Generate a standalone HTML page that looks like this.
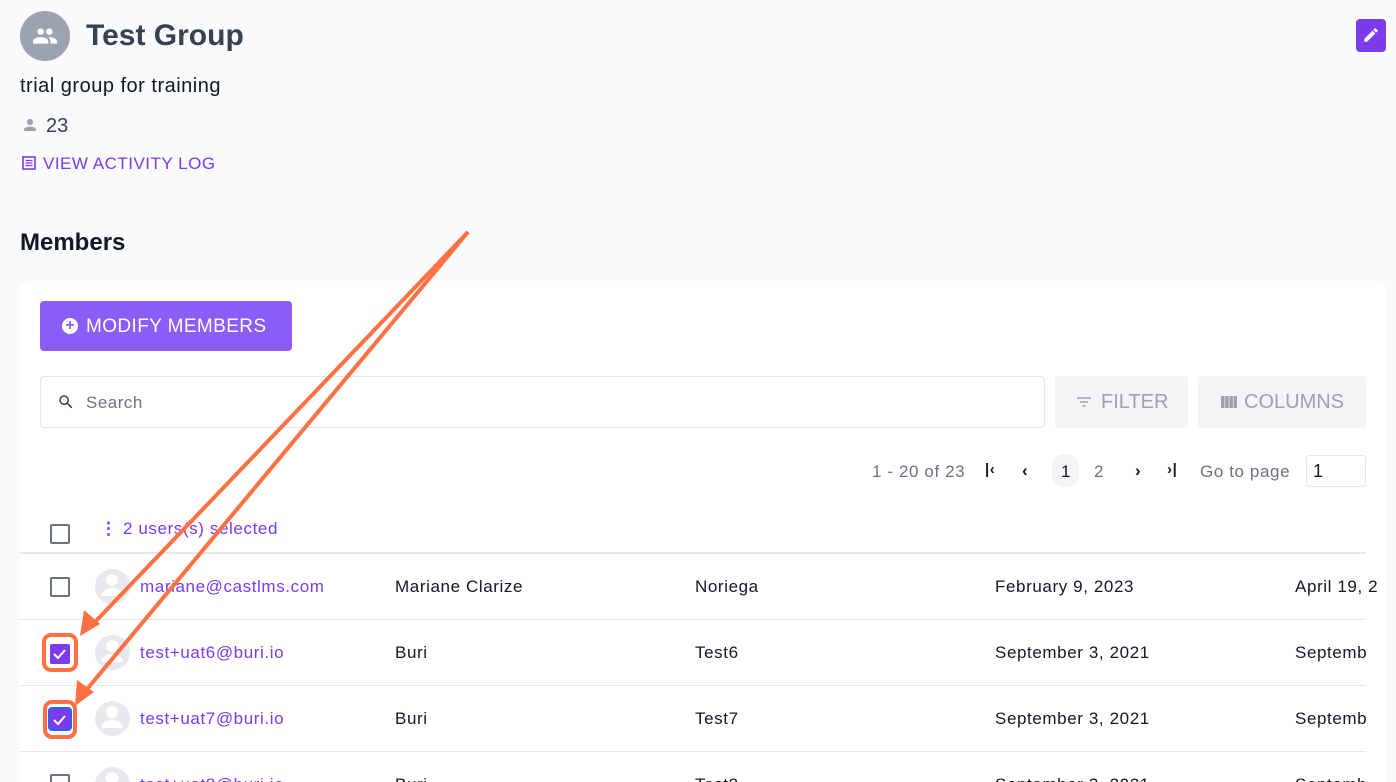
<!DOCTYPE html>
<html style="overflow:hidden;height:782px"><head><style>
*{box-sizing:border-box;margin:0;padding:0}
body{width:1396px;height:782px;overflow:hidden;background:#f9fafb;font-family:"Liberation Sans",sans-serif;position:relative;color:#111827}
.abs{position:absolute}
.card{position:absolute;left:20px;top:281px;width:1366px;height:501px;background:#fff;border-radius:8px 8px 0 0;overflow:hidden}
.cb{position:absolute;width:20px;height:20px;border:2px solid #6b7280;border-radius:2px;background:#fff}
.cbc{position:absolute;width:20px;height:20px;background:#7c3aed;border-radius:2px}
.av{position:absolute;width:35px;height:35px;border-radius:50%;background:#e8e9ec;overflow:hidden}
.row{position:absolute;left:20px;width:1346px;border-top:1px solid #e5e7eb}
.t{position:absolute;font-size:17px;white-space:nowrap;letter-spacing:0.6px}
.em{color:#7c3aed}
</style></head><body>
<div class="abs" style="left:20px;top:11px;width:50px;height:50px;border-radius:50%;background:#9ca3af"></div>
<svg class="abs" style="left:31px;top:23px" width="28" height="26" viewBox="0 0 24 24"><path fill="#fff" d="M16 11c1.66 0 2.99-1.34 2.99-3S17.66 5 16 5s-3 1.34-3 3 1.34 3 3 3zm-8 0c1.66 0 2.99-1.34 2.99-3S9.66 5 8 5 5 6.34 5 8s1.34 3 3 3zm0 2c-2.33 0-7 1.17-7 3.5V19h14v-2.5c0-2.33-4.67-3.5-7-3.5zm8 0c-.29 0-.62.02-.97.05 1.16.84 1.97 1.97 1.97 3.45V19h6v-2.5c0-2.33-4.67-3.5-7-3.5z"/></svg>
<div class="abs" style="left:86px;top:19px;font-size:30px;font-weight:bold;color:#374151">Test Group</div>
<div class="abs" style="left:1356px;top:19px;width:30px;height:33px;border-radius:4px;background:#7c3aed"></div>
<svg class="abs" style="left:1362px;top:26px" width="18" height="18" viewBox="0 0 24 24"><path fill="#fff" d="M3 17.25V21h3.75L17.81 9.94l-3.75-3.75L3 17.25zM20.71 7.04a1 1 0 000-1.41l-2.34-2.34a1 1 0 00-1.41 0l-1.83 1.83 3.75 3.75 1.83-1.83z"/></svg>
<div class="abs" style="left:20px;top:75px;font-size:20px;letter-spacing:0.5px">trial group for training</div>
<svg class="abs" style="left:21px;top:116px" width="18" height="18" viewBox="0 0 24 24"><path fill="#9ca3af" d="M12 12c2.21 0 4-1.79 4-4s-1.79-4-4-4-4 1.79-4 4 1.79 4 4 4zm0 2c-2.67 0-8 1.34-8 4v2h16v-2c0-2.66-5.33-4-8-4z"/></svg>
<div class="abs" style="left:46px;top:115px;font-size:20px;color:#374151">23</div>
<svg class="abs" style="left:22px;top:156px" width="14" height="14" viewBox="0 0 14 14"><rect x="1" y="1" width="12" height="12" fill="none" stroke="#7c3aed" stroke-width="1.6"/><path d="M3.5 4.5h7M3.5 7h7M3.5 9.5h7" stroke="#7c3aed" stroke-width="1.3"/></svg>
<div class="abs em" style="left:43px;top:154px;font-size:17px;letter-spacing:0.5px">VIEW ACTIVITY LOG</div>
<div class="abs" style="left:20px;top:229px;font-size:24px;font-weight:bold">Members</div>
<div class="card"></div>
<div class="abs" style="left:40px;top:301px;width:252px;height:50px;background:#8b5cf6;border-radius:4px;color:#fff;font-size:19px;line-height:52px;padding-left:46px;letter-spacing:0.4px">MODIFY MEMBERS</div>
<div class="abs" style="left:62px;top:318px;width:16px;height:16px;border-radius:50%;background:#fff;color:#8b5cf6;font-size:16px;font-weight:bold;line-height:16px;text-align:center">+</div>
<div class="abs" style="left:40px;top:376px;width:1005px;height:52px;border:1px solid #e5e7eb;border-radius:4px"></div>
<svg class="abs" style="left:57px;top:393px" width="18" height="18" viewBox="0 0 24 24"><path fill="#374151" d="M15.5 14h-.79l-.28-.27A6.47 6.47 0 0016 9.5 6.5 6.5 0 109.5 16c1.61 0 3.09-.59 4.23-1.57l.27.28v.79l5 4.99L20.49 19l-4.99-5zm-6 0C7.01 14 5 11.99 5 9.5S7.01 5 9.5 5 14 7.01 14 9.5 11.99 14 9.5 14z"/></svg>
<div class="abs" style="left:86px;top:393px;font-size:17px;color:#6b7280;letter-spacing:0.5px">Search</div>
<div class="abs" style="left:1055px;top:376px;width:133px;height:52px;background:#f3f4f6;border-radius:4px;color:#9ca3af;font-size:20px;line-height:53px;padding-left:46px">FILTER</div>
<svg class="abs" style="left:1076px;top:395px" width="16" height="14" viewBox="0 0 16 14"><path d="M1 3h14M4 7h8M6.5 11h3" stroke="#9ca3af" stroke-width="1.6"/></svg>
<div class="abs" style="left:1198px;top:376px;width:168px;height:52px;background:#f3f4f6;border-radius:4px;color:#9ca3af;font-size:20px;line-height:53px;padding-left:46px">COLUMNS</div>
<svg class="abs" style="left:1221px;top:396px" width="16" height="12" viewBox="0 0 16 12"><path d="M0 0h3.5v12H0zM4.2 0h3.5v12H4.2zM8.4 0h3.5v12H8.4zM12.6 0H16v12h-3.4z" fill="#9ca3af"/></svg>
<div class="t" style="left:872px;top:462px;color:#6b7280">1 - 20 of 23</div>
<div class="t" style="left:985px;top:461px;font-weight:bold;font-size:15px">|‹</div>
<div class="t" style="left:1022px;top:461px;font-weight:bold">‹</div>
<div class="abs" style="left:1052px;top:454px;width:27px;height:33px;border-radius:12px;background:#f3f4f6"></div>
<div class="t" style="left:1061px;top:462px">1</div>
<div class="t" style="left:1094px;top:462px;color:#6b7280">2</div>
<div class="t" style="left:1135px;top:461px;font-weight:bold">›</div>
<div class="t" style="left:1167px;top:461px;font-weight:bold;font-size:15px">›|</div>
<div class="t" style="left:1200px;top:462px;color:#6b7280">Go to page</div>
<div class="abs" style="left:1306px;top:455px;width:60px;height:32px;border:1px solid #e5e7eb;border-radius:4px;font-size:18px;padding:5px 6px">1</div>
<div class="cb" style="left:50px;top:524px"></div>
<div class="t em" style="left:100px;top:519px;font-weight:bold">⋮</div>
<div class="t em" style="left:123px;top:519px">2 users(s) selected</div>
<div class="row" style="top:552px;border-top:2px solid #e5e7eb"></div>
<div class="row" style="top:619px"></div><div class="row" style="top:685px"></div><div class="row" style="top:751px"></div>

<div class="cb" style="left:50px;top:577px"></div>
<div class="av" style="left:95px;top:569px"></div>
<div class="t em" style="left:140px;top:577px">mariane@castlms.com</div>
<div class="t" style="left:395px;top:577px">Mariane Clarize</div>
<div class="t" style="left:695px;top:577px">Noriega</div>
<div class="t" style="left:995px;top:577px">February 9, 2023</div>
<div class="t" style="left:1295px;top:577px">April 19, 2</div>

<div class="cbc" style="left:50px;top:644px"></div>
<div class="av" style="left:95px;top:635px"></div>
<div class="t em" style="left:140px;top:643px">test+uat6@buri.io</div>
<div class="t" style="left:395px;top:643px">Buri</div>
<div class="t" style="left:695px;top:643px">Test6</div>
<div class="t" style="left:995px;top:643px">September 3, 2021</div>
<div class="t" style="left:1295px;top:643px">Septemb</div>

<div class="cbc" style="left:50px;top:709px;outline:2px solid #2563eb"></div>
<div class="av" style="left:95px;top:701px"></div>
<div class="t em" style="left:140px;top:709px">test+uat7@buri.io</div>
<div class="t" style="left:395px;top:709px">Buri</div>
<div class="t" style="left:695px;top:709px">Test7</div>
<div class="t" style="left:995px;top:709px">September 3, 2021</div>
<div class="t" style="left:1295px;top:709px">Septemb</div>

<div class="cb" style="left:50px;top:774px"></div>
<div class="av" style="left:95px;top:767px"></div>
<div class="t em" style="left:140px;top:775px">test+uat8@buri.io</div>
<div class="t" style="left:395px;top:775px">Buri</div>
<div class="t" style="left:695px;top:775px">Test8</div>
<div class="t" style="left:995px;top:775px">September 3, 2021</div>
<div class="t" style="left:1295px;top:775px">Septemb</div>

<svg class="abs" style="left:0;top:0" width="1396" height="782">
<g fill="#fff">
<circle cx="112" cy="580" r="6"/><path d="M101 596a11 8 0 0122 0z"/>
<circle cx="112" cy="646" r="6"/><path d="M101 662a11 8 0 0122 0z"/>
<circle cx="112" cy="712" r="6"/><path d="M101 728a11 8 0 0122 0z"/>
<circle cx="112" cy="778" r="6"/>
</g>
<path d="M54 654l4 4 7-8M54 720l4 4 7-8" stroke="#fff" stroke-width="2" fill="none"/>
<rect x="44" y="635" width="32" height="35" rx="7" fill="none" stroke="#ff7043" stroke-width="4"/>
<rect x="45" y="702" width="30" height="35" rx="7" fill="none" stroke="#ff7043" stroke-width="4"/>
<g stroke="#ff7043" stroke-width="4" fill="#ff7043">
<line x1="468" y1="232" x2="95" y2="622"/>
<line x1="468" y1="232" x2="88" y2="688"/>
</g>
<path d="M80 636l4-26 16 14z" fill="#ff7043"/>
<path d="M75 706l2-26 17 12z" fill="#ff7043"/>
</svg>
</body></html>
